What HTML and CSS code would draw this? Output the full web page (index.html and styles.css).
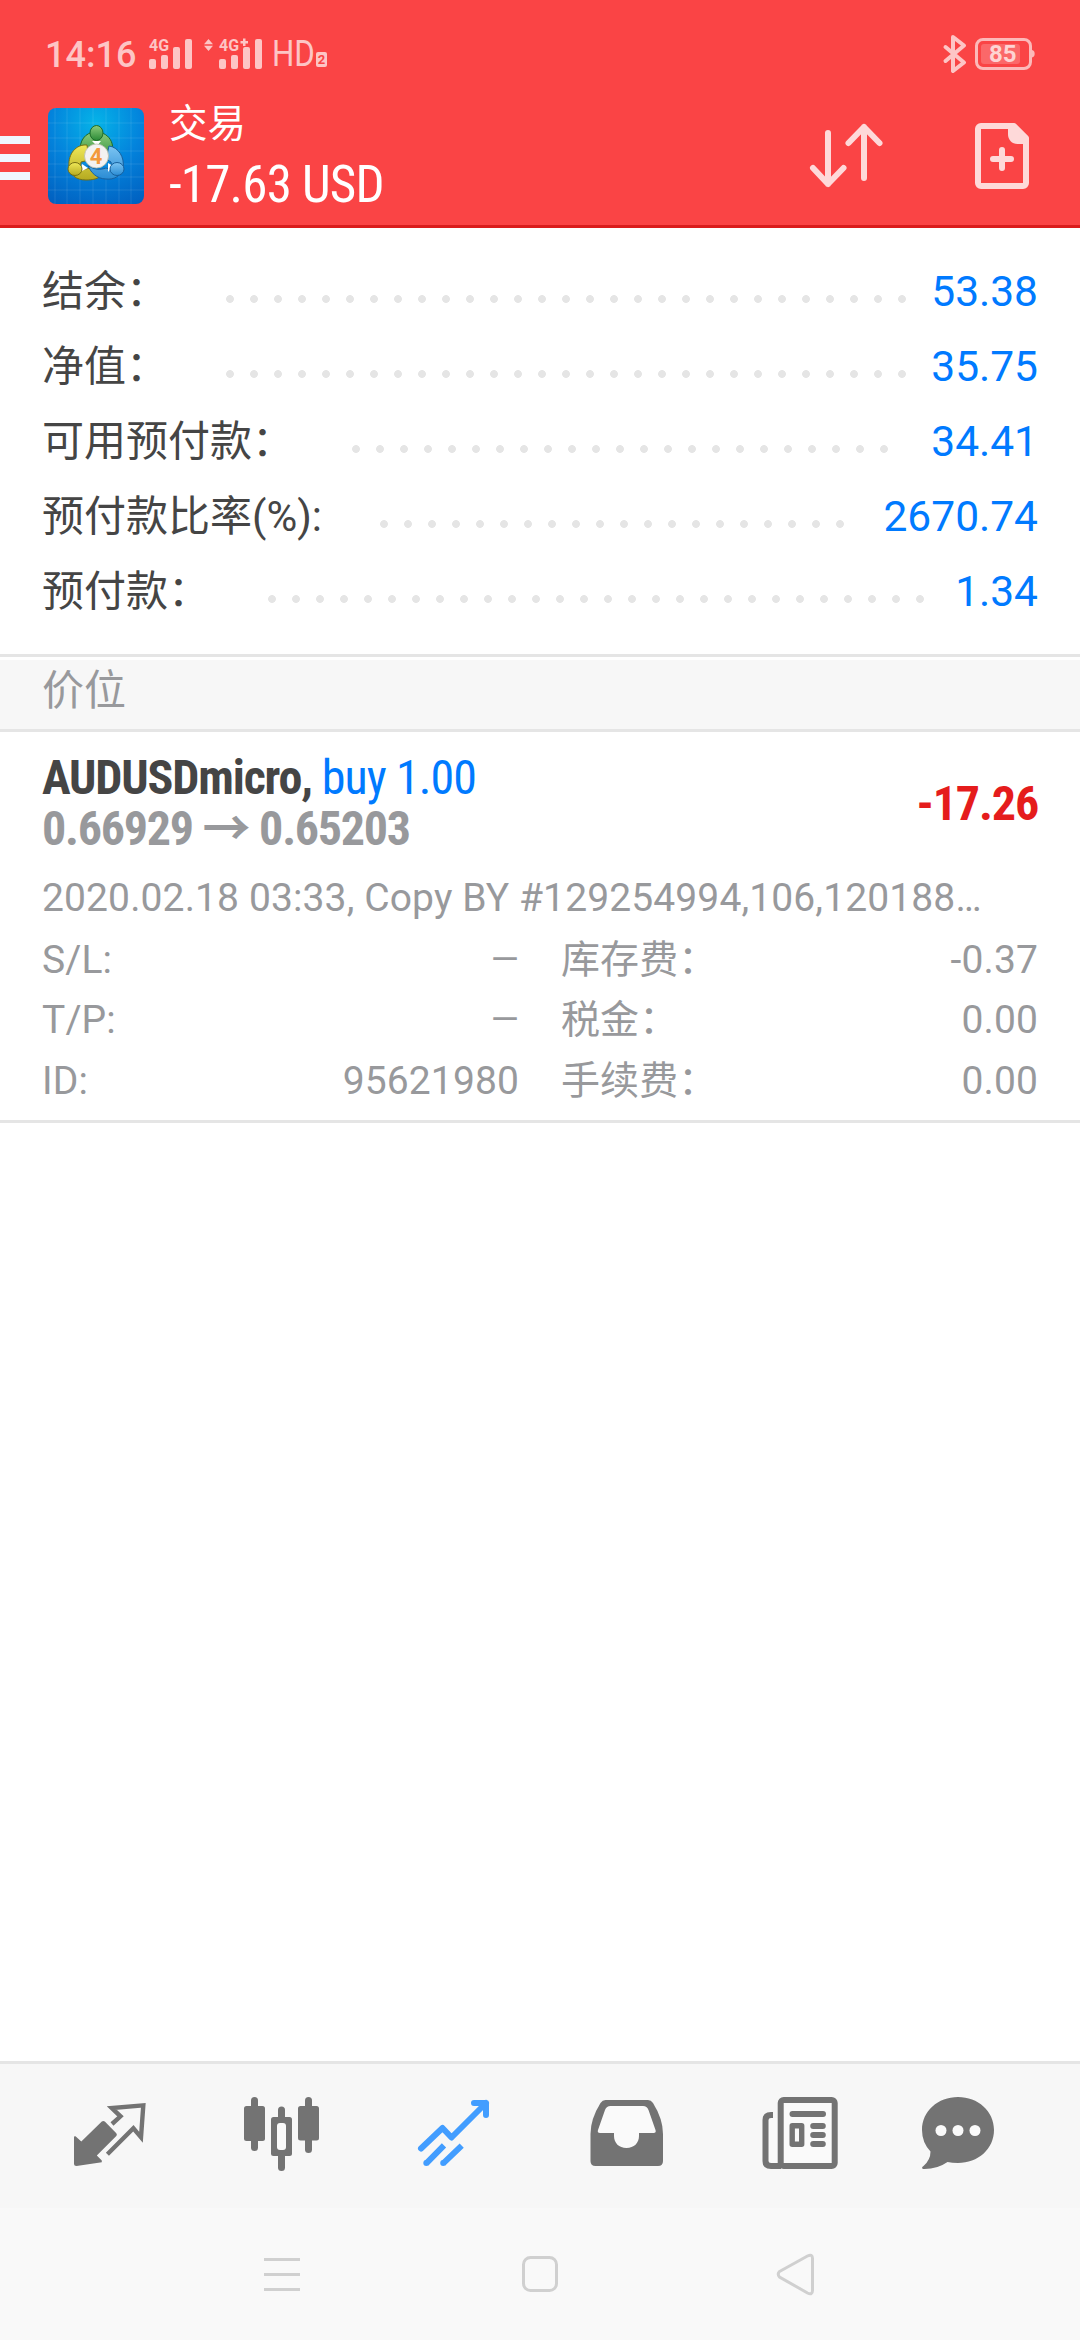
FILE: index.html
```html
<!DOCTYPE html>
<html lang="zh-CN">
<head>
<meta charset="utf-8">
<title>交易</title>
<link rel="stylesheet" href="styles.css">
</head>
<body>
<div class="screen">
  <header class="header">
    <div class="status">
      <span class="clock">14:16</span>
      <svg class="signals" width="125" height="36" viewBox="147 36 125 36">
        <g fill="#fdc5c5">
          <rect x="149" y="59" width="7" height="10" rx="2"/><rect x="161" y="55" width="7" height="14" rx="2"/><rect x="173" y="47" width="7" height="22" rx="2"/><rect x="185" y="39" width="7" height="30" rx="2"/>
          <path d="M208.500 39l4.500 5.300h-9zM208.500 51l-4.500-5.300h9z"/>
          <rect x="219" y="59" width="7" height="10" rx="2"/><rect x="231" y="55" width="7" height="14" rx="2"/><rect x="243" y="47" width="7" height="22" rx="2"/><rect x="255" y="39" width="7" height="30" rx="2"/>
          <path d="M243 38.500h2.500v2.500h2.500v2.500h-2.500v2.500h-2.500v-2.500h-2.500v-2.500h2.500z"/>
          <text class="net" x="149" y="51" textLength="20" lengthAdjust="spacingAndGlyphs">4G</text>
          <text class="net" x="219" y="51" textLength="20" lengthAdjust="spacingAndGlyphs">4G</text>
        </g>
      </svg>
      <span class="hd">HD</span>
      <span class="sim">2</span>
      <svg class="power" width="100" height="42" viewBox="940 34 100 42">
        <path d="M945.500 47L964 62.500 953 71V37l11 8.500L945.500 61" fill="none" stroke="#fdc5c5" stroke-width="4" stroke-linecap="round" stroke-linejoin="round"/>
        <rect x="976.500" y="39.500" width="54" height="29" rx="6.500" fill="none" stroke="#fcb9b9" stroke-width="3"/>
        <path d="M1032 50a3.200 3.800 0 0 1 0 7.500z" fill="#fcb9b9"/>
        <rect x="981" y="44" width="39" height="20" rx="3" fill="#fb6869"/>
        <text class="level" x="989" y="62">85</text>
      </svg>
    </div>
    <div class="bar">
      <div class="menu"><i></i><i></i><i></i></div>
      <svg class="logo" width="96" height="96" viewBox="0 0 96 96">
        <defs>
          <radialGradient id="sky" cx=".5" cy=".15" r=".95"><stop offset="0" stop-color="#05b3e8"/><stop offset=".5" stop-color="#0383dc"/><stop offset="1" stop-color="#0160c0"/></radialGradient>
          <linearGradient id="gr" x2="0" y2="1"><stop stop-color="#8ccc7c"/><stop offset="1" stop-color="#2a8a36"/></linearGradient>
          <linearGradient id="ye" x2="0" y2="1"><stop stop-color="#f0e858"/><stop offset="1" stop-color="#b5aa20"/></linearGradient>
          <linearGradient id="bl" x2="0" y2="1"><stop stop-color="#7cc4f2"/><stop offset="1" stop-color="#2a8cd4"/></linearGradient>
        </defs>
        <rect width="96" height="96" rx="8" fill="url(#sky)"/>
        <path d="M7 0v96M19 0v96M32 0v96M45 0v96M58 0v96M71 0v96M83 0v96M0 15h96M0 30h96M0 43h96M0 56h96M0 69h96M0 82h96" stroke="#fff" stroke-opacity=".1"/>
        <path d="M48 24c-11 0-17 9-16 21l8 5 9-8 6 6 5 5c10-13 3-29-12-29z" fill="url(#gr)" stroke="#1d6b28"/>
        <path d="M39 37c-11-1-19 9-18 21 1 9 7 14 17 14 6 0 11-1 13-3l-8-9-11 2 1-8 8-2z" fill="url(#ye)" stroke="#777012"/>
        <path d="M61 38c9 1 16 11 14 22-2 8-9 12-17 11-9 0-16-7-18-14 5 5 13 5 18 3l6 2-1-8-5-3z" fill="url(#bl)" stroke="#17609d"/>
        <path d="M34 56l6 4-8 4zM60 55l5 3-5 6zM44 33h9l-4 5z" fill="#fff"/>
        <ellipse cx="48.500" cy="25" rx="6.500" ry="7.500" fill="url(#gr)" stroke="#1d6b28"/>
        <ellipse cx="27" cy="61" rx="7" ry="6.500" fill="url(#ye)" stroke="#777012"/>
        <ellipse cx="69" cy="61" rx="7" ry="6.500" fill="url(#bl)" stroke="#17609d"/>
        <circle cx="48.500" cy="48" r="12" fill="#f4f2f1" stroke="#b9bba8" stroke-width=".8"/>
        <text class="four" x="48" y="56">4</text>
      </svg>
      <div class="titles"><div class="title">交易</div><div class="total"><span class="cond">-17.63 USD</span></div></div>
      <svg class="actions" width="240" height="72" viewBox="800 120 240 72" fill="none" stroke="#fed9d9" stroke-width="6" stroke-linecap="round" stroke-linejoin="round">
        <path d="M828 133v51M813 168l15 16 15.500-16M864 178v-51M848.500 143l15.500-16 15.500 16"/>
        <path d="M981 126h33l12 12v45a3 3 0 0 1-3 3h-42a3 3 0 0 1-3-3v-54a3 3 0 0 1 3-3zM1002 150v18M993 159h18"/>
        <path d="M1008 126v8c0 6 4 10 9.500 10h8v-8l-12-10z" fill="#fed9d9" stroke="none"/>
      </svg>
    </div>
  </header>

  <section class="summary">
    <div class="line"><span class="label">结余：</span><i class="dots" style="width:696px"></i><b class="value">53.38</b></div>
    <div class="line"><span class="label">净值：</span><i class="dots" style="width:696px"></i><b class="value">35.75</b></div>
    <div class="line"><span class="label">可用预付款：</span><i class="dots" style="width:552px"></i><b class="value">34.41</b></div>
    <div class="line"><span class="label">预付款比率(%):</span><i class="dots" style="width:480px"></i><b class="value">2670.74</b></div>
    <div class="line"><span class="label">预付款：</span><i class="dots" style="width:672px"></i><b class="value">1.34</b></div>
  </section>
  <h2 class="section">价位</h2>
  <article class="position">
    <div class="top">
      <div class="deal">
        <div class="cond"><strong>AUDUSDmicro,</strong> <span class="side">buy 1.00</span></div>
        <div class="cond prices">0.66929 → 0.65203</div>
      </div>
      <div class="profit"><span class="cond">-17.26</span></div>
    </div>
    <div class="comment">2020.02.18 03:33, Copy BY #129254994,106,120188…</div>
    <dl class="facts">
      <div><dt>S/L:</dt><dd class="none">—</dd></div><div><dt>库存费：</dt><dd>-0.37</dd></div>
      <div><dt>T/P:</dt><dd class="none">—</dd></div><div><dt>税金：</dt><dd>0.00</dd></div>
      <div><dt>ID:</dt><dd>95621980</dd></div><div><dt>手续费：</dt><dd>0.00</dd></div>
    </dl>
  </article>
  <main class="space"></main>

  <nav class="tabs">
    <svg width="172" height="144" viewBox="24 2064 172 144"><path d="M74 2136.500l1.500-.3 5.800 5.300 20.500-20q1.500-1.200 3 0l11.500 11.800q1.200 1.400 0 2.700L96.800 2155.500l5 5v1.800L76.500 2166q-2.500 0-2.500-2.500z" fill="#737373"/><path d="M112 2124l8.500-7.700-8.700-8.300 31.500-2.700-2.300 32-7.600-9-26 26" fill="none" stroke="#737373" stroke-width="4.400"/></svg>
    <svg width="172" height="144" viewBox="196 2064 172 144" fill="#737373"><rect x="251" y="2097" width="7" height="54" rx="3.500"/><rect x="244" y="2106" width="21" height="35" rx="2.500"/><rect x="278" y="2106.500" width="7" height="64.500" rx="3.500"/><rect x="271" y="2117" width="21" height="39" rx="2.500"/><rect x="277" y="2123" width="9" height="27" rx="3" fill="#fafafa"/><rect x="305" y="2097" width="7" height="56" rx="3.500"/><rect x="298" y="2106" width="21" height="34.500" rx="2.500"/></svg>
    <svg width="172" height="144" viewBox="368 2064 172 144" fill="none" stroke="#429dff" stroke-width="6"><path d="M421 2148.500l21.500-20.500 9 9.500L486 2103M474 2103h12v12" stroke-linecap="round" stroke-linejoin="round"/><path d="M426.300 2163.300l17.700-18M443.200 2163.300l18.500-17.600"/><circle cx="426.300" cy="2163" r="3" stroke="none" fill="#429dff"/><circle cx="443.200" cy="2163" r="3" stroke="none" fill="#429dff"/></svg>
    <svg width="172" height="144" viewBox="540 2064 172 144"><path d="M605.500 2100H648q3 0 5 3 10 16 10 31v27q0 5-5 5h-62.500q-5 0-5-5v-27q0-15 10-31 2-3 5-3z" fill="#737373"/><path d="M610.500 2106H643q4 0 5.500 4l7 20q1 3-2 3h-14.500v3c0 7-5 12-12.500 12s-12.500-5-12.500-12v-3h-14q-3 0-2-3l7-20q1.500-4 5.500-4z" fill="#fafafa"/></svg>
    <svg width="172" height="144" viewBox="712 2064 172 144" fill="none" stroke="#737373" stroke-width="6"><path d="M768.500 2118h10v45h-10z" fill="#fafafa" stroke="none"/><path d="M773 2115h-2q-5.500 0-5.500 5v41q0 5 5.500 5h10"/><rect x="780.700" y="2100" width="54" height="66" rx="3" fill="#fafafa"/><path d="M792.500 2114h30.500M813.200 2126h9.600M813.200 2135h9.600M813.200 2144h9.600" stroke-linecap="round"/><rect x="792.200" y="2125.800" width="9.500" height="18.500" stroke-width="5.400" stroke-linejoin="round"/></svg>
    <svg width="148" height="144" viewBox="884 2064 148 144"><path d="M958 2097c20 0 36 14 36 33s-16 33-36 33q-6 0-10.500-1-10 7-23 7c-3 0-3-1.500-1-3q7-6 7-14.500-8.500-9-8.500-21.500c0-19 16-33 36-33z" fill="#737373"/><g fill="#fafafa"><circle cx="941" cy="2130.500" r="5.500"/><circle cx="958" cy="2130.500" r="5.500"/><circle cx="975" cy="2130.500" r="5.500"/></g></svg>
  </nav>
  <div class="keys">
    <svg width="560" height="44" viewBox="260 2252 560 44" fill="none" stroke="#d0d0d0" stroke-width="3"><path d="M264 2259.500h36M264 2274.500h36M264 2289.500h36"/><rect x="523.500" y="2257.500" width="33" height="33" rx="7"/><path d="M779.500 2271.500l28-15.500q5-2.500 5 2.500v32q0 5-5 2.500l-28-16q-2.500-3 0-5.500z"/></svg>
  </div>
</div>
</body>
</html>
```
FILE: styles.css
```css
* { box-sizing: border-box; margin: 0; padding: 0; }
body { width: 1080px; background: #fff; font-family: Roboto, "Noto Sans CJK SC", sans-serif; }
.screen { display: flex; flex-direction: column; width: 1080px; height: 2340px; overflow: hidden; }
.cond { font-family: "Roboto Condensed", Roboto, "Noto Sans CJK SC", sans-serif; font-stretch: 75%; letter-spacing: -1.150px; white-space: nowrap; }

.header { height: 228px; background: #fa4445; border-bottom: 3px solid #d91c1c; color: #fff; }
.status { display: flex; height: 96px; padding: 34px 40px 0 45px; color: #fdc5c5; }
.clock { width: 102px; font-size: 36px; font-weight: 500; line-height: 43px; }
.signals { margin-top: 2px; }
.net { font: 700 17px Roboto, sans-serif; }
.hd { width: 44px; font-size: 36px; line-height: 41px; transform: scaleX(.87); transform-origin: left; }
.sim { width: 11px; height: 15px; margin-top: 18px; border-radius: 2px; background: #fdc5c5; color: #fa4445; font-size: 13px; font-weight: 700; line-height: 15px; text-align: center; }
.power { margin-left: auto; }
.level { font: 700 24px Roboto, sans-serif; fill: #fed3d3; }
.bar { display: flex; height: 129px; }
.menu { display: flex; flex-direction: column; gap: 10px; width: 30px; padding-top: 40px; }
.menu i { height: 8px; background: #f0f6ff; }
.logo { margin: 12px 0 0 18px; }
.four { font: 700 22px Roboto, sans-serif; fill: #f39a3c; text-anchor: middle; }
.titles { margin-left: 25px; }
.title { font-size: 38.500px; line-height: 56px; }
.total { font-size: 51px; line-height: 65px; }
.total .cond { letter-spacing: -.8px; }
.actions { margin: 24px 40px 0 auto; }

.summary { height: 429px; padding: 26px 42px 0; border-bottom: 3px solid #e5e5e5; }
.line { display: flex; height: 75px; line-height: 75px; font-size: 42px; color: #454545; }
.label { white-space: nowrap; }
.dots { height: 8px; margin: 41px 0 0 50px; background: radial-gradient(circle at center, #e5e5e5 3.500px, transparent 4.300px) 0 0 / 24px 8px repeat-x; }
.value { margin-left: auto; font-weight: 400; font-size: 42.500px; color: #007aff; }

.section { height: 75px; padding-left: 42px; border-top: 3px solid #fff; border-bottom: 3px solid #e5e5e5; background: #f7f7f7; color: #98999c; font-size: 42px; font-weight: 400; line-height: 62px; }
.position { height: 391px; padding: 20px 42px 0; border-bottom: 3px solid #e5e5e5; color: #98999c; font-size: 39px; letter-spacing: .12px; }
.top { display: flex; justify-content: space-between; height: 102px; font-size: 48px; line-height: 51px; }
.deal strong { color: #454545; }
.side { color: #007aff; letter-spacing: -.9px; }
.prices, .profit { font-weight: 700; }
.prices { letter-spacing: -1.250px; }
.profit { padding-top: 26px; color: #e51c1c; }
.comment { height: 75.500px; padding-top: 18px; line-height: 53px; white-space: nowrap; }
.facts { display: grid; grid-template-columns: 477px 477px; column-gap: 42px; line-height: 60.500px; }
.facts div { display: flex; justify-content: space-between; }
.facts .none { font-size: 36px; }

.space { flex: 1; }
.tabs { display: flex; height: 147px; padding-left: 24px; border-top: 3px solid #e5e5e5; background: #f7f7f7; }
.keys { display: flex; height: 132px; padding: 44px 0 0 260px; background: #f9f9f9; }
```
